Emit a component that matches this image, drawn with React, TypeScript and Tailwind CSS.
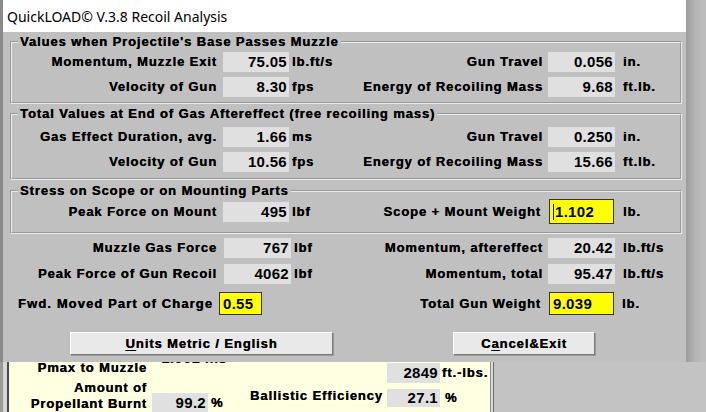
import React from "react";

const lbl = "text-[13px] font-bold tracking-[0.9px] leading-4 whitespace-nowrap [text-shadow:0.3px_0_0_#000]";
const num = "text-[15px] font-bold tracking-[0.3px] leading-5 whitespace-nowrap";

type Cell = { label: string; value: string; unit: string };

function ValueBox({ value, className }: { value: string; className: string }) {
  return (
    <div className={`h-5 shrink-0 bg-[#e0e0e0] text-right pr-[2px] ${num} ${className}`}>{value}</div>
  );
}

function YellowBox({
  value,
  className,
  caret,
}: {
  value: string;
  className: string;
  caret?: boolean;
}) {
  return (
    <div
      className={`flex shrink-0 items-center bg-[#ffff00] border border-[#333] pl-[3px] ${num} ${className}`}
    >
      {caret && <span className="w-px h-4 bg-black mr-[1px]" />}
      {value}
    </div>
  );
}

function Row({
  inner,
  left,
  right,
  className,
}: {
  inner?: boolean;
  left: Cell;
  right: Cell;
  className: string;
}) {
  return (
    <div className={`flex items-center h-5 ${className}`}>
      <div className={`${inner ? "w-[205px]" : "w-[214px]"} shrink-0 text-right ${lbl}`}>{left.label}</div>
      <ValueBox value={left.value} className={inner ? "ml-[6px] w-[66px]" : "ml-[7px] w-[67px]"} />
      <div className={`ml-[3px] w-[60px] shrink-0 ${lbl}`}>{left.unit}</div>
      <div className={`${inner ? "w-[191px]" : "w-[189px]"} shrink-0 text-right ${lbl}`}>{right.label}</div>
      <ValueBox value={right.value} className="ml-[5px] w-[67px]" />
      <div className={`ml-[8px] ${lbl}`}>{right.unit}</div>
    </div>
  );
}

function Group({
  title,
  className,
  children,
}: {
  title: string;
  className: string;
  children: React.ReactNode;
}) {
  return (
    <fieldset
      className={`ml-[7px] mr-[4px] border-2 [border-style:groove] border-[#ececec] ${className}`}
    >
      <legend className={`ml-[6px] px-[2px] ${lbl}`}>{title}</legend>
      {children}
    </fieldset>
  );
}

function Button({ children, className }: { children: React.ReactNode; className: string }) {
  return (
    <div
      className={`h-[23px] shrink-0 flex items-center justify-center bg-[#e9e9e9] border border-t-white border-l-white border-b-[#7a7a7a] border-r-[#7a7a7a] shadow-[1px_1px_0_#9a9a9a] ${lbl} ${className}`}
    >
      {children}
    </div>
  );
}

export default function App() {
  return (
    <div className="w-[706px] h-[412px] overflow-hidden bg-[#c0c0c0] flex flex-col font-['Liberation_Sans',Arial,sans-serif] text-black">
      <div className="flex h-[362px] shrink-0">
        <div className="w-[3px] bg-[#8a8a8a]" />
        <div className="w-[683px] flex flex-col bg-[#c0c0c0]">
          <div className="h-8 shrink-0 bg-white flex items-center pl-1 font-['Noto_Sans',sans-serif] text-[14px]">
            QuickLOAD© V.3.8 Recoil Analysis
          </div>

          <Group title="Values when Projectile's Base Passes Muzzle" className="mt-[2px] pb-[5px]">
            <Row
              inner
              className="mt-[2px]"
              left={{ label: "Momentum, Muzzle Exit", value: "75.05", unit: "lb.ft/s" }}
              right={{ label: "Gun Travel", value: "0.056", unit: "in." }}
            />
            <Row
              inner
              className="mt-[5px]"
              left={{ label: "Velocity of Gun", value: "8.30", unit: "fps" }}
              right={{ label: "Energy of Recoiling Mass", value: "9.68", unit: "ft.lb." }}
            />
          </Group>

          <Group
            title="Total Values at End of Gas Aftereffect (free recoiling mass)"
            className="mt-[2px] pb-[6px]"
          >
            <Row
              inner
              className="mt-[5px]"
              left={{ label: "Gas Effect Duration, avg.", value: "1.66", unit: "ms" }}
              right={{ label: "Gun Travel", value: "0.250", unit: "in." }}
            />
            <Row
              inner
              className="mt-[5px]"
              left={{ label: "Velocity of Gun", value: "10.56", unit: "fps" }}
              right={{ label: "Energy of Recoiling Mass", value: "15.66", unit: "ft.lb." }}
            />
          </Group>

          <Group title="Stress on Scope or on Mounting Parts" className="mt-[3px] pb-[8px]">
            <div className="flex items-center h-[25px]">
              <div className={`w-[205px] shrink-0 text-right ${lbl}`}>Peak Force on Mount</div>
              <ValueBox value="495" className="ml-[6px] w-[66px]" />
              <div className={`ml-[3px] w-[60px] shrink-0 ${lbl}`}>lbf</div>
              <div className={`w-[189px] shrink-0 text-right ${lbl}`}>Scope + Mount Weight</div>
              <YellowBox value="1.102" caret className="ml-[8px] w-[65px] h-[25px]" />
              <div className={`ml-[9px] ${lbl}`}>lb.</div>
            </div>
          </Group>

          <Row
            className="mt-[4px]"
            left={{ label: "Muzzle Gas Force", value: "767", unit: "lbf" }}
            right={{ label: "Momentum, aftereffect", value: "20.42", unit: "lb.ft/s" }}
          />
          <Row
            className="mt-[6px]"
            left={{ label: "Peak Force of Gun Recoil", value: "4062", unit: "lbf" }}
            right={{ label: "Momentum, total", value: "95.47", unit: "lb.ft/s" }}
          />
          <div className="flex items-center h-[23px] mt-[8px]">
            <div className={`w-[210px] shrink-0 text-right tracking-[1.1px] ${lbl}`}>Fwd. Moved Part of Charge</div>
            <YellowBox value="0.55" className="ml-[6px] w-[43px] h-[23px]" />
            <div className={`w-[279px] shrink-0 text-right ${lbl}`}>Total Gun Weight</div>
            <YellowBox value="9.039" className="ml-[8px] w-[65px] h-[23px]" />
            <div className={`ml-[8px] ${lbl}`}>lb.</div>
          </div>

          <div className="flex mt-[17px]">
            <Button className="ml-[67px] w-[263px]">
              <span>
                <span className="underline underline-offset-2">U</span>nits Metric / English
              </span>
            </Button>
            <Button className="ml-[120px] w-[142px]">
              <span>
                C<span className="underline underline-offset-2">a</span>ncel&amp;Exit
              </span>
            </Button>
          </div>
        </div>
        <div className="flex-1 bg-gradient-to-r from-[#9c9c9c] via-[#b6b6b6] to-[#bdbdbd]" />
      </div>

      <div className="flex flex-1">
        <div className="w-[3px] bg-[#9a9a9a]" />
        <div className="w-[4px] bg-[#d6d6d6]" />
        <div className="w-[2px] bg-[#4a4a4a]" />
        <div className="w-[481px] bg-[#ffffe1] flex">
          <div className="w-[138px] shrink-0 flex flex-col items-end -mt-[1px]">
            <div className={`${lbl} leading-[14px]`}>Pmax to Muzzle</div>
            <div className={`mt-[6px] ${lbl} leading-[14px]`}>Amount of</div>
            <div className={`mt-[2px] ${lbl} leading-[14px]`}>Propellant Burnt</div>
          </div>
          <div className="w-[100px] shrink-0 flex flex-col">
            <div className="ml-[5px] w-[75px] h-[3px] overflow-hidden">
              <div className={`-mt-[14px] text-right ${num}`}>1.061 ms</div>
            </div>
            <div className="flex items-center mt-[28px]">
              <ValueBox value="99.2" className="ml-[5px] w-[56px] h-4 leading-4" />
              <div className={`ml-[3px] ${lbl}`}>%</div>
            </div>
          </div>
          <div className="w-[140px] shrink-0 flex items-end pb-[9px]">
            <div className={`ml-[3px] ${lbl}`}>Ballistic Efficiency</div>
          </div>
          <div className="flex flex-col pt-px">
            <div className="flex items-center">
              <ValueBox value="2849" className="w-[53px]" />
              <div className={`ml-[2px] tracking-[0.4px] ${lbl}`}>ft.-lbs.</div>
            </div>
            <div className="flex items-center mt-[6px]">
              <ValueBox value="27.1" className="w-[53px] h-[18px] leading-[18px]" />
              <div className={`ml-[5px] ${lbl}`}>%</div>
            </div>
          </div>
        </div>
        <div className="w-px bg-[#8a8a8a]" />
        <div className="w-[2px] bg-[#dcdcdc]" />
        <div className="w-px bg-[#6a6a6a]" />
        <div className="flex-1 bg-[#c3c3c3]" />
      </div>
    </div>
  );
}
